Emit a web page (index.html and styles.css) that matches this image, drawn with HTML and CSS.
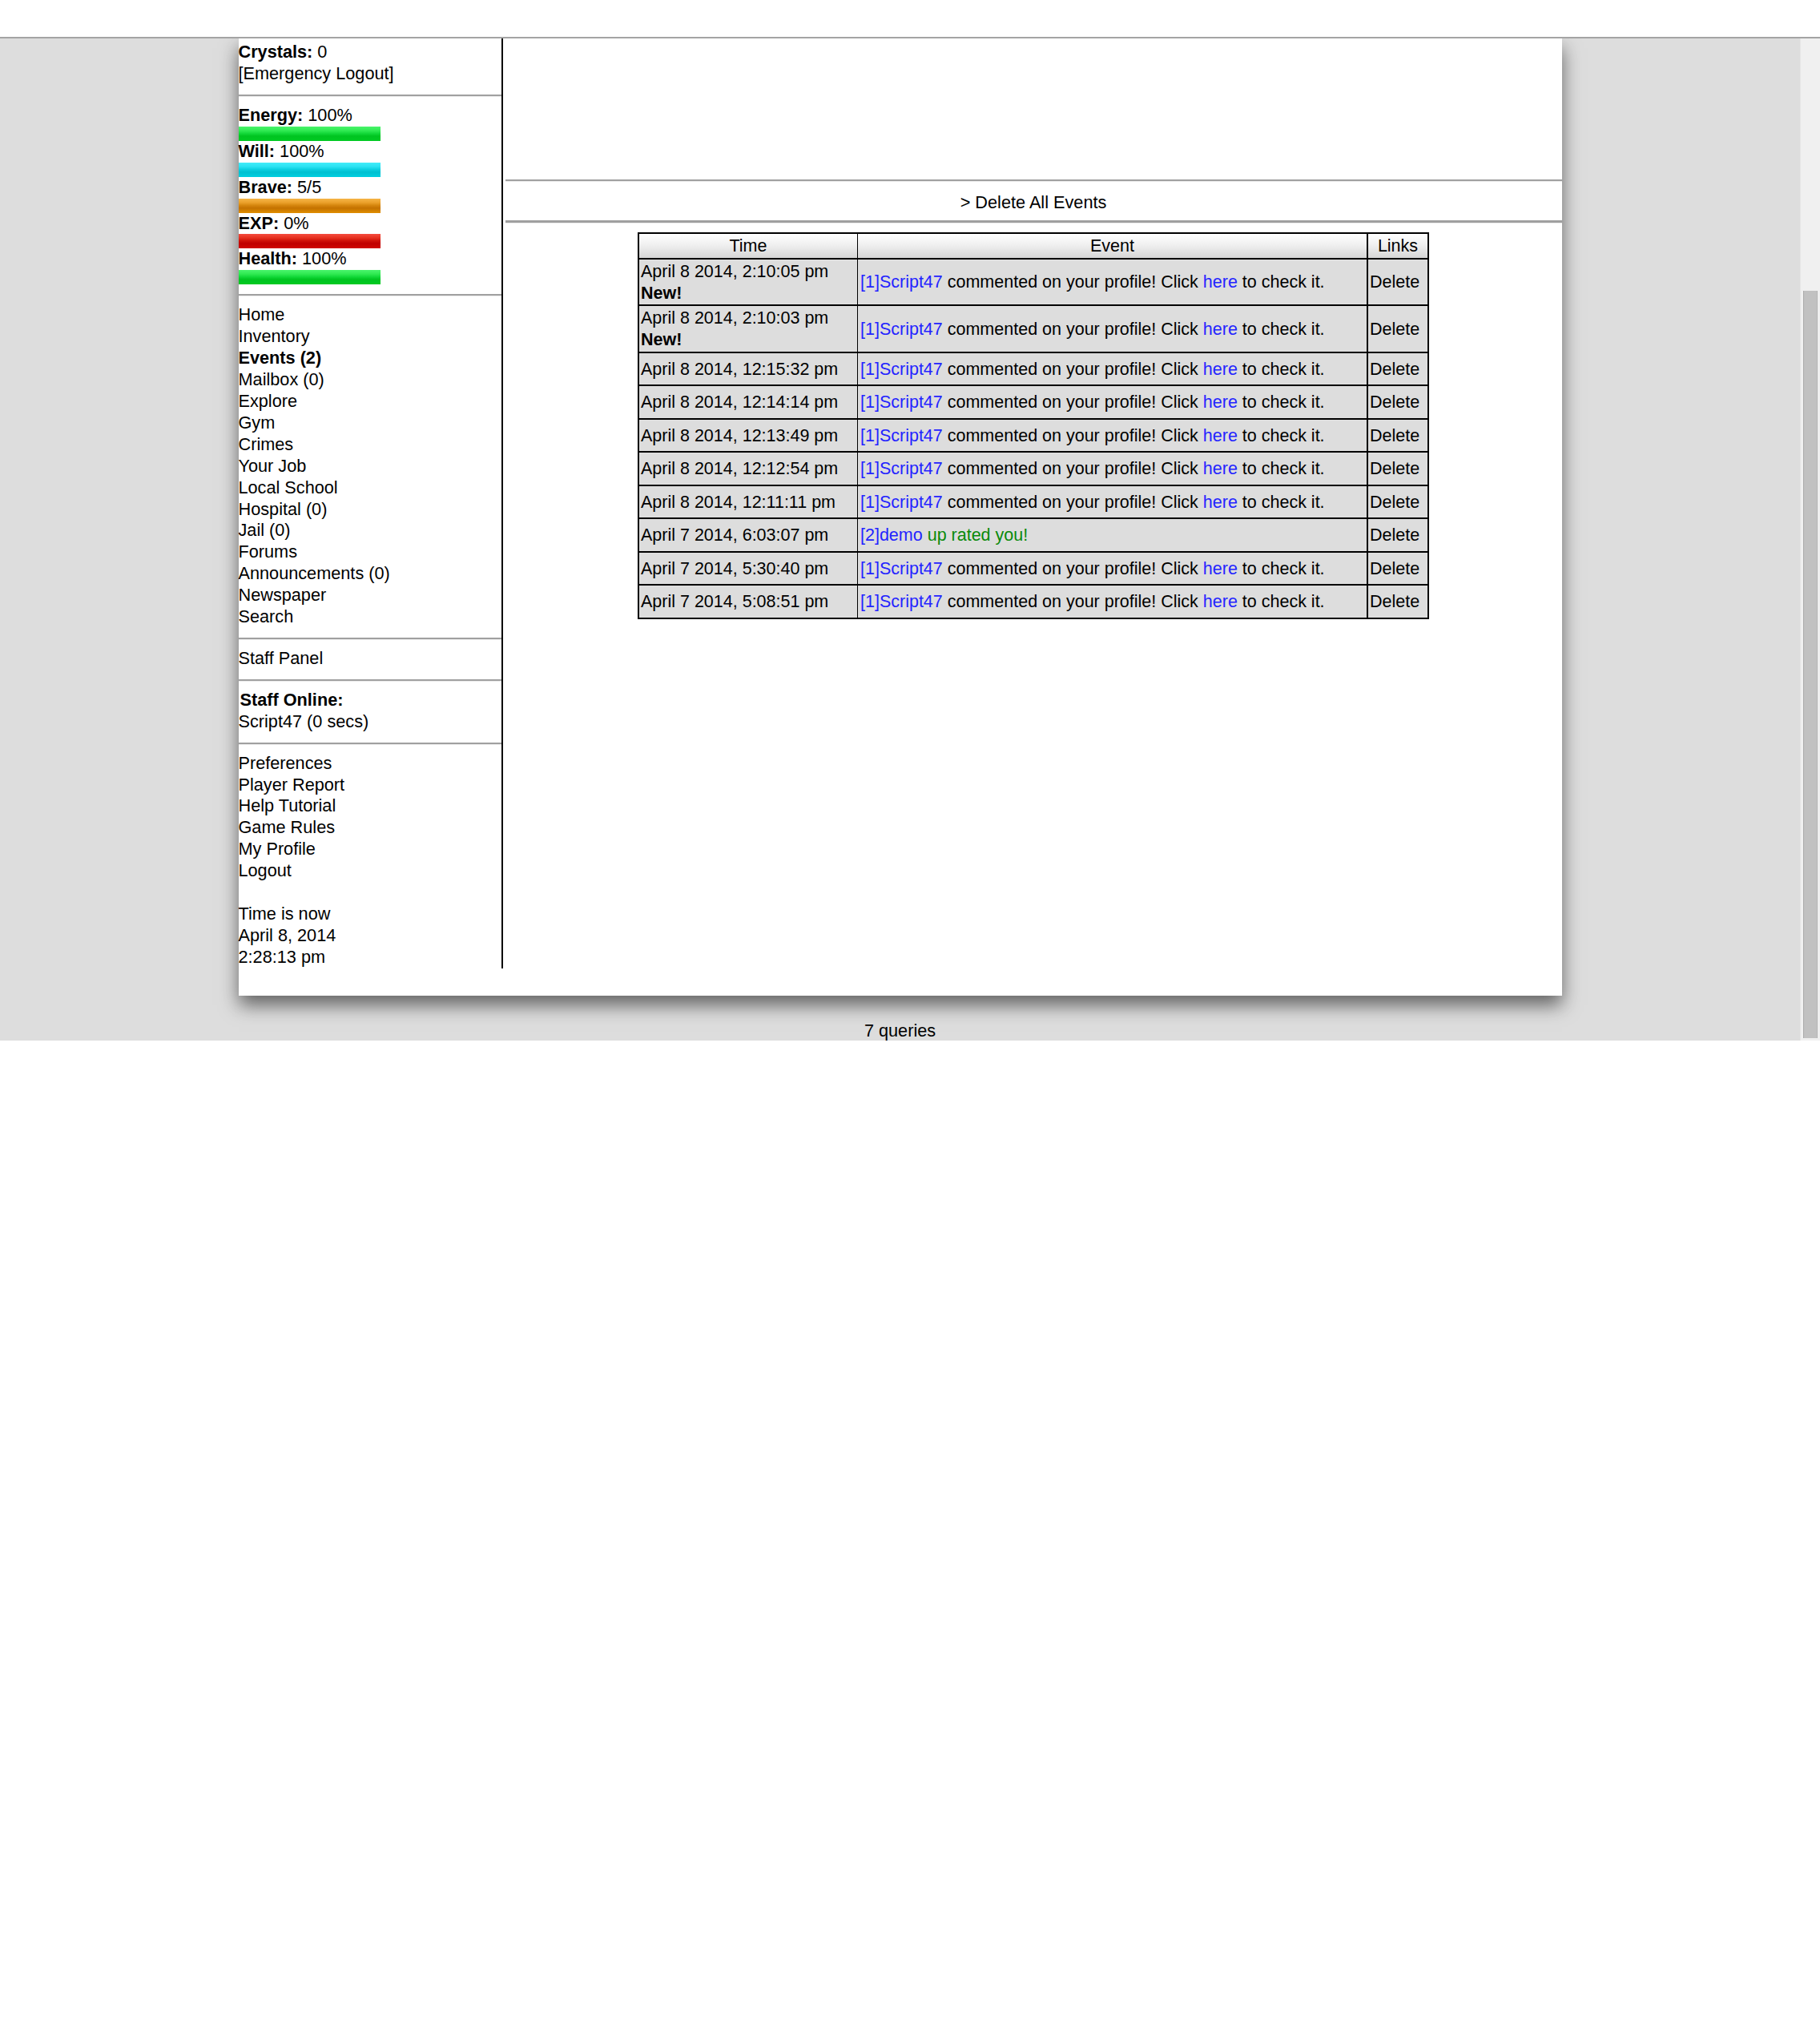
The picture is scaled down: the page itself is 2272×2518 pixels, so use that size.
FILE: index.html
```html
<!DOCTYPE html>
<html>
<head>
<meta charset="utf-8">
<title>Events</title>
<link rel="stylesheet" href="styles.css">
</head>
<body>
<div class="topband"></div>
<div class="viewport">
  <div class="page">
    <div class="container">
      <div class="sidebar">
        <div class="side-block">
          <div><b>Crystals:</b> 0</div>
          <div><a href="#">[Emergency Logout]</a></div>
        </div>
        <hr class="rule">
        <div class="stats">
          <div><b>Energy:</b> 100%</div>
          <div class="bar bar-green"></div>
          <div><b>Will:</b> 100%</div>
          <div class="bar bar-cyan"></div>
          <div><b>Brave:</b> 5/5</div>
          <div class="bar bar-orange"></div>
          <div><b>EXP:</b> 0%</div>
          <div class="bar bar-red"></div>
          <div><b>Health:</b> 100%</div>
          <div class="bar bar-green"></div>
        </div>
        <hr class="rule">
        <ul class="menu">
          <li><a href="#">Home</a></li>
          <li><a href="#">Inventory</a></li>
          <li><a href="#" class="strong">Events (2)</a></li>
          <li><a href="#">Mailbox (0)</a></li>
          <li><a href="#">Explore</a></li>
          <li><a href="#">Gym</a></li>
          <li><a href="#">Crimes</a></li>
          <li><a href="#">Your Job</a></li>
          <li><a href="#">Local School</a></li>
          <li><a href="#">Hospital (0)</a></li>
          <li><a href="#">Jail (0)</a></li>
          <li><a href="#">Forums</a></li>
          <li><a href="#">Announcements (0)</a></li>
          <li><a href="#">Newspaper</a></li>
          <li><a href="#">Search</a></li>
        </ul>
        <hr class="rule">
        <div><a href="#">Staff Panel</a></div>
        <hr class="rule">
        <div class="staff">
          <div class="staff-title"><b>Staff Online:</b></div>
          <div><a href="#">Script47</a> (0 secs)</div>
        </div>
        <hr class="rule">
        <ul class="menu">
          <li><a href="#">Preferences</a></li>
          <li><a href="#">Player Report</a></li>
          <li><a href="#">Help Tutorial</a></li>
          <li><a href="#">Game Rules</a></li>
          <li><a href="#">My Profile</a></li>
          <li><a href="#">Logout</a></li>
        </ul>
        <div class="clock">
          <div>Time is now</div>
          <div>April 8, 2014</div>
          <div>2:28:13 pm</div>
        </div>
      </div>
      <div class="main">
        <div class="main-head"></div>
        <hr class="rule-main">
        <div class="actions"><a href="#">&gt; Delete All Events</a></div>
        <hr class="rule-main rule-thick">
        <table class="events">
          <thead>
            <tr>
              <th class="c-time">Time</th>
              <th class="c-event">Event</th>
              <th class="c-links">Links</th>
            </tr>
          </thead>
          <tbody>
            <tr>
              <td class="c-time">April 8 2014, 2:10:05 pm<br><b>New!</b></td>
              <td class="c-event"><a href="#" class="blue">[1]Script47</a> commented on your profile! Click <a href="#" class="blue">here</a> to check it.</td>
              <td class="c-links"><a href="#">Delete</a></td>
            </tr>
            <tr>
              <td class="c-time">April 8 2014, 2:10:03 pm<br><b>New!</b></td>
              <td class="c-event"><a href="#" class="blue">[1]Script47</a> commented on your profile! Click <a href="#" class="blue">here</a> to check it.</td>
              <td class="c-links"><a href="#">Delete</a></td>
            </tr>
            <tr>
              <td class="c-time">April 8 2014, 12:15:32 pm</td>
              <td class="c-event"><a href="#" class="blue">[1]Script47</a> commented on your profile! Click <a href="#" class="blue">here</a> to check it.</td>
              <td class="c-links"><a href="#">Delete</a></td>
            </tr>
            <tr>
              <td class="c-time">April 8 2014, 12:14:14 pm</td>
              <td class="c-event"><a href="#" class="blue">[1]Script47</a> commented on your profile! Click <a href="#" class="blue">here</a> to check it.</td>
              <td class="c-links"><a href="#">Delete</a></td>
            </tr>
            <tr>
              <td class="c-time">April 8 2014, 12:13:49 pm</td>
              <td class="c-event"><a href="#" class="blue">[1]Script47</a> commented on your profile! Click <a href="#" class="blue">here</a> to check it.</td>
              <td class="c-links"><a href="#">Delete</a></td>
            </tr>
            <tr>
              <td class="c-time">April 8 2014, 12:12:54 pm</td>
              <td class="c-event"><a href="#" class="blue">[1]Script47</a> commented on your profile! Click <a href="#" class="blue">here</a> to check it.</td>
              <td class="c-links"><a href="#">Delete</a></td>
            </tr>
            <tr>
              <td class="c-time">April 8 2014, 12:11:11 pm</td>
              <td class="c-event"><a href="#" class="blue">[1]Script47</a> commented on your profile! Click <a href="#" class="blue">here</a> to check it.</td>
              <td class="c-links"><a href="#">Delete</a></td>
            </tr>
            <tr>
              <td class="c-time">April 7 2014, 6:03:07 pm</td>
              <td class="c-event"><a href="#" class="blue">[2]demo</a> <span class="green">up rated you!</span></td>
              <td class="c-links"><a href="#">Delete</a></td>
            </tr>
            <tr>
              <td class="c-time">April 7 2014, 5:30:40 pm</td>
              <td class="c-event"><a href="#" class="blue">[1]Script47</a> commented on your profile! Click <a href="#" class="blue">here</a> to check it.</td>
              <td class="c-links"><a href="#">Delete</a></td>
            </tr>
            <tr class="last">
              <td class="c-time">April 7 2014, 5:08:51 pm</td>
              <td class="c-event"><a href="#" class="blue">[1]Script47</a> commented on your profile! Click <a href="#" class="blue">here</a> to check it.</td>
              <td class="c-links"><a href="#">Delete</a></td>
            </tr>
          </tbody>
        </table>
      </div>
    </div>
    <div class="footer">7 queries</div>
  </div>
  <div class="scrollbar"><div class="thumb"></div></div>
</div>
</body>
</html>
```
FILE: styles.css
```css
* {
  box-sizing: border-box;
}

html,
body {
  margin: 0;
  padding: 0;
  background: #ffffff;
}

body {
  font-family: "Liberation Sans", Arial, sans-serif;
  font-size: 21.7px;
  line-height: 26.9px;
  color: #000000;
}

a {
  color: #000000;
  text-decoration: none;
}

b,
.strong {
  font-weight: bold;
}

.topband {
  height: 48px;
  background: #ffffff;
  border-bottom: 2px solid #a4a4a4;
}

.viewport {
  display: flex;
  height: 1251px;
  background: #dddddd;
  overflow: hidden;
}

.page {
  flex: 1;
  min-width: 0;
  display: flex;
  flex-direction: column;
  align-items: center;
}

.container {
  width: 1652px;
  flex-shrink: 0;
  display: flex;
  align-items: flex-start;
  background: #ffffff;
  padding-bottom: 34px;
  box-shadow: 0 12px 22px rgba(0, 0, 0, 0.55);
}

/* ---------- sidebar ---------- */
.sidebar {
  width: 330px;
  flex-shrink: 0;
  border-right: 2px solid #000000;
  padding-top: 4px;
}

.rule {
  height: 0;
  margin: 12px 0 10px;
  border: 0;
  border-top: 2px solid #a0a0a0;
  border-bottom: 1px solid #ececec;
}

.bar {
  width: 177px;
  height: 18px;
}

.bar-green {
  background: linear-gradient(to bottom, #4af46c 0%, #30ea52 28%, #12d838 48%, #00c420 66%, #00ca22 100%);
}

.bar-cyan {
  background: linear-gradient(to bottom, #44ecfa 0%, #2ae2f2 28%, #0ccfe0 48%, #00c0d0 66%, #00cfe0 100%);
}

.bar-orange {
  background: linear-gradient(to bottom, #f6b446 0%, #eaa02a 28%, #d4840c 48%, #c47200 66%, #e08e00 100%);
}

.bar-red {
  background: linear-gradient(to bottom, #f44c40 0%, #e6301f 28%, #cf1008 48%, #bf0000 66%, #d00600 100%);
}

.menu {
  list-style: none;
  margin: 0;
  padding: 0;
}

.staff-title {
  padding-left: 2px;
}

.clock {
  margin-top: 26.9px;
}

/* ---------- main ---------- */
.main {
  flex: 1;
  min-width: 0;
  padding-left: 3px;
}

.main-head {
  height: 176px;
}

.rule-main {
  height: 0;
  margin: 0;
  border: 0;
  border-top: 2px solid #a0a0a0;
  border-bottom: 1px solid #ececec;
}

.rule-thick {
  border-top-width: 3px;
}

.actions {
  text-align: center;
  padding: 12.7px 0 8.4px;
}

.events {
  width: 988px;
  margin: 11px auto 0;
  border: 2px solid #000000;
  border-spacing: 0;
  table-layout: fixed;
  background: #dddddd;
  font-size: 21.5px;
}

.events th {
  font-weight: normal;
  text-align: center;
  padding: 2px 2px 1px;
  background: linear-gradient(to bottom, #ffffff 0%, #f0f0f0 45%, #d6d6d6 100%);
  border-bottom: 2px solid #000000;
}

.events td {
  text-align: left;
  vertical-align: middle;
  padding: 2px 2px 1px;
  height: 41.5px;
  line-height: 26.7px;
  border-bottom: 2px solid #000000;
}

.events tr.last td {
  border-bottom: 0;
  height: 39.5px;
}

.events .c-time {
  width: 273px;
  border-right: 1px solid #000000;
}

.events .c-event {
  width: 637px;
  border-right: 2px solid #000000;
}

.events td.c-event {
  padding-left: 3px;
}

.events .c-links {
  width: 74px;
}

.blue {
  color: #2424ff;
}

.green {
  color: #0a8a0a;
}

/* ---------- footer & scrollbar ---------- */
.footer {
  margin-top: 31px;
  text-align: center;
  flex-shrink: 0;
}

.scrollbar {
  width: 25px;
  flex-shrink: 0;
  display: flex;
  flex-direction: column;
  padding: 315px 3px 3px;
  background: #f0f0f0;
  border-left: 1px solid #e6e6e6;
}

.thumb {
  flex: 1;
  background: #c1c1c1;
  border-left: 1px solid #a9a9a9;
  border-right: 1px solid #b4b4b4;
}
```
